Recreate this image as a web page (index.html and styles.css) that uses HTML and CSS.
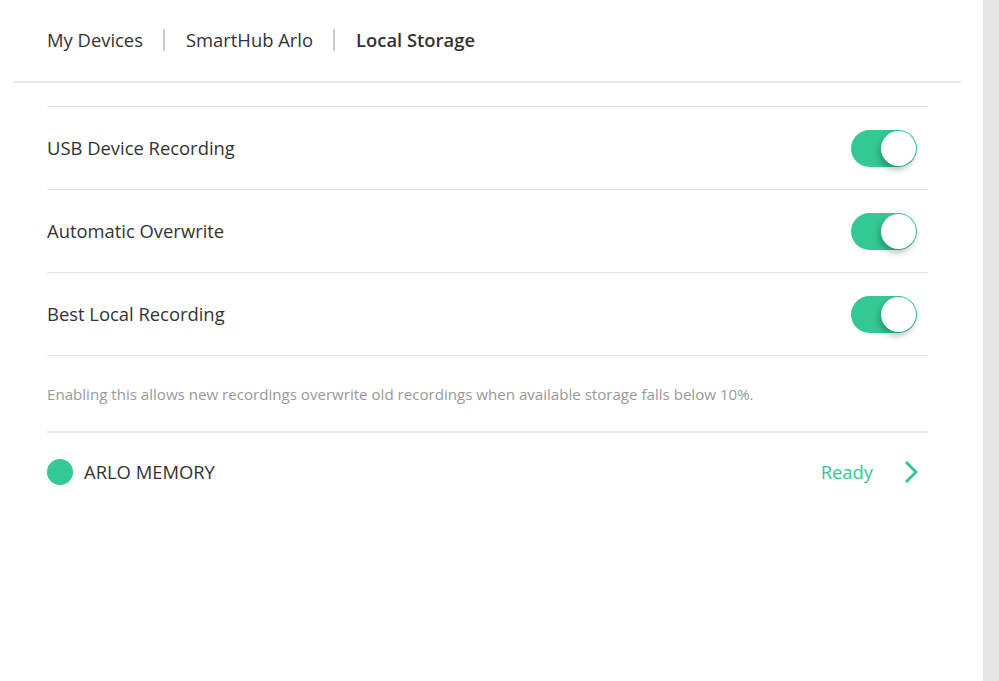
FILE: index.html
```html
<!DOCTYPE html>
<html>
<head>
    <title>Local Storage</title>
    <link rel="stylesheet" href="styles.css">
</head>
<body>
    <div class="page">
        <div class="breadcrumb">
            <span class="crumb">My Devices</span>
            <span class="crumb">SmartHub Arlo</span>
            <span class="crumb current">Local Storage</span>
        </div>

        <div class="settings">
            <div class="row">
                <span class="label">USB Device Recording</span>
                <div class="toggle on"><div class="knob"></div></div>
            </div>
            <div class="row">
                <span class="label">Automatic Overwrite</span>
                <div class="toggle on"><div class="knob"></div></div>
            </div>
            <div class="row">
                <span class="label">Best Local Recording</span>
                <div class="toggle on"><div class="knob"></div></div>
            </div>

            <p class="note">Enabling this allows new recordings overwrite old recordings when available storage falls below 10%.</p>

            <div class="device">
                <span class="dot"></span>
                <span class="device-name">ARLO MEMORY</span>
                <span class="status">Ready</span>
                <svg class="chevron" width="14" height="24" viewBox="0 0 14 24">
                    <path d="M2 2 L12 12 L2 22" fill="none" stroke="#33c894" stroke-width="3"/>
                </svg>
            </div>
        </div>
    </div>
    <div class="scrollbar"></div>
</body>
</html>
```

FILE: styles.css
```css
html, body {
    margin: 0;
    height: 100%;
}

body {
    display: flex;
    font-family: 'Open Sans', 'Liberation Sans', sans-serif;
    color: #333;
    background: #fff;
    overflow: hidden;
}

.page {
    flex: 1;
    padding-left: 14px;
    padding-right: 22px;
}

.scrollbar {
    width: 16px;
    background: #e6e6e6;
}

.breadcrumb {
    display: flex;
    align-items: center;
    height: 79px;
    padding-left: 33px;
    padding-bottom: 2px;
    border-bottom: 2px solid #e8e8e8;
    font-size: 18.4px;
}

.crumb {
    padding: 0 20px 0 21px;
    line-height: 22px;
    border-left: 2px solid #ccc;
}

.crumb:first-child {
    padding-left: 0;
    border-left: none;
}

.crumb.current {
    font-weight: 600;
}

.settings {
    margin: 23px 33px 0;
    border-top: 1px solid #e3e3e3;
}

.row {
    display: flex;
    align-items: center;
    justify-content: space-between;
    height: 82px;
    border-bottom: 1px solid #e3e3e3;
    font-size: 18.4px;
}

.label {
    margin-bottom: 2px;
}

.toggle {
    width: 66px;
    height: 37px;
    border-radius: 19px;
    background: #33c894;
    position: relative;
    margin-right: 11px;
}

.knob {
    position: absolute;
    right: 1px;
    top: 1px;
    width: 35px;
    height: 35px;
    border-radius: 50%;
    background: #fff;
    box-shadow: -2px 4px 6px rgba(0, 0, 0, 0.25);
}

.note {
    margin: 0;
    padding: 28px 0 27px;
    font-size: 15.1px;
    color: #999;
    border-bottom: 2px solid #e8e8e8;
}

.device {
    display: flex;
    align-items: center;
    height: 77px;
    font-size: 18.4px;
}

.dot {
    width: 26px;
    height: 26px;
    border-radius: 50%;
    background: #33c894;
    margin-right: 11px;
}

.device-name {
    flex: 1;
}

.status {
    color: #33c894;
    margin-right: 31px;
}

.chevron {
    margin-right: 10px;
}
```
